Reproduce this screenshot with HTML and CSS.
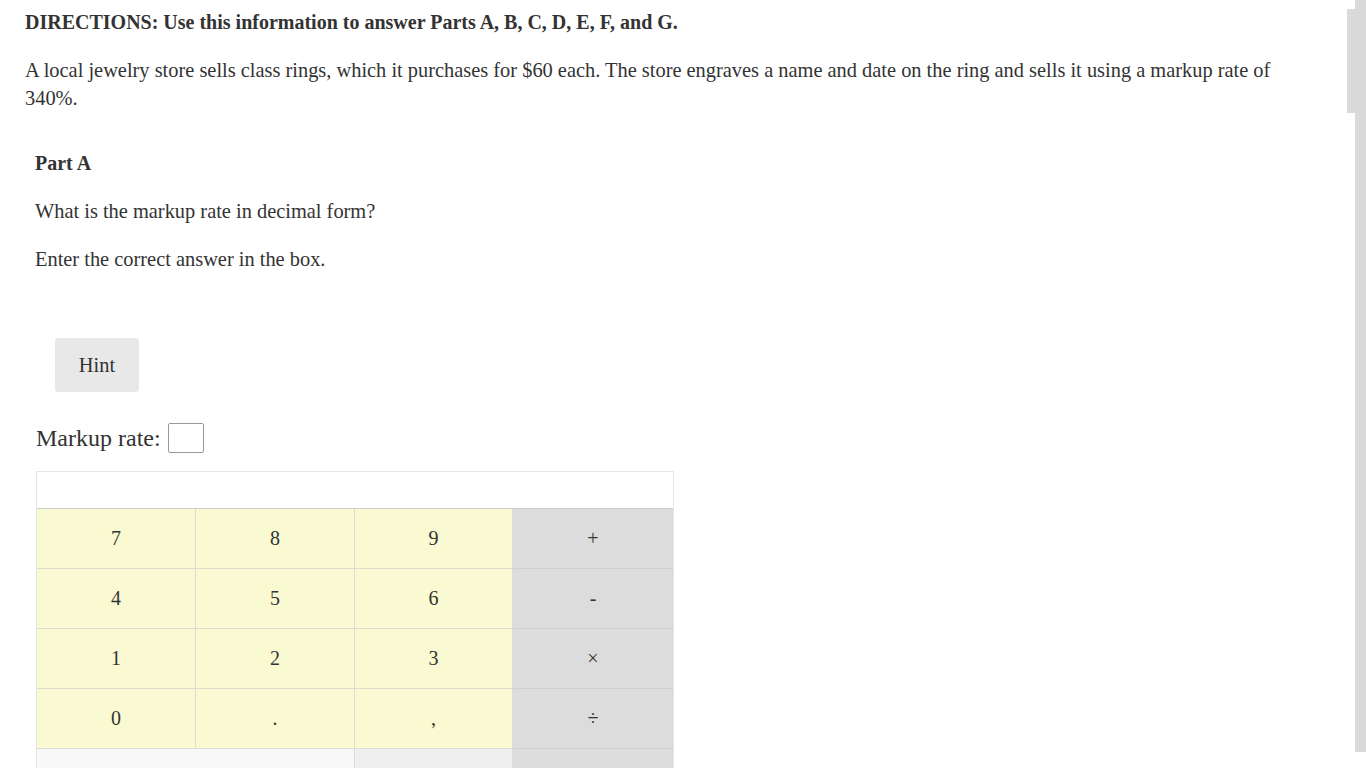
FILE: index.html
```html
<!DOCTYPE html>
<html>
<head>
<meta charset="utf-8">
<link rel="stylesheet" href="styles.css">
</head>
<body>
<div class="page">
  <p class="directions">DIRECTIONS: Use this information to answer Parts A, B, C, D, E, F, and G.</p>
  <p class="stem">A local jewelry store sells class rings, which it purchases for $60 each. The store engraves a name and date on the ring and sells it using a markup rate of 340%.</p>
  <div class="part">
    <p class="part-title">Part A</p>
    <p class="q">What is the markup rate in decimal form?</p>
    <p class="q">Enter the correct answer in the box.</p>
    <button class="hint">Hint</button>
    <div class="answer">
      <span class="label">Markup rate:</span>
      <span class="box"></span>
    </div>
    <div class="keypad">
      <div class="display"></div>
      <div class="keys">
        <div class="key num">7</div><div class="key num">8</div><div class="key num">9</div><div class="key op">+</div>
        <div class="key num">4</div><div class="key num">5</div><div class="key num">6</div><div class="key op">-</div>
        <div class="key num">1</div><div class="key num">2</div><div class="key num">3</div><div class="key op">×</div>
        <div class="key num">0</div><div class="key num">.</div><div class="key num">,</div><div class="key op">÷</div>
        <div class="key wide"></div><div class="key light"></div><div class="key op"></div>
      </div>
    </div>
  </div>
</div>
<div class="scroll-track"></div>
<div class="scroll-thumb"></div>
</body>
</html>
```
FILE: styles.css
```css
html, body {
  margin: 0;
  padding: 0;
  background: #fff;
  overflow: hidden;
  height: 768px;
}
body {
  font-family: "Liberation Serif", "Times New Roman", serif;
  color: #333;
}
.page {
  width: 1280px;
  padding: 8px 0 0 25px;
}
p {
  margin: 0;
  font-size: 20.4px;
  line-height: 28px;
}
.directions {
  font-weight: bold;
  font-size: 20px;
}
.stem {
  margin-top: 20px;
}
.part {
  padding-left: 10px;
  margin-top: 37px;
}
.part-title {
  font-weight: bold;
  font-size: 20px;
}
.q {
  margin-top: 20px;
}
.hint {
  display: block;
  margin: 65px 0 0 20px;
  width: 84px;
  height: 54px;
  border: none;
  border-radius: 3px;
  background: #e8e8e8;
  font-family: "Liberation Serif", "Times New Roman", serif;
  font-size: 20.4px;
  color: #333;
  padding: 0;
}
.answer {
  display: flex;
  align-items: center;
  gap: 7px;
  margin: 30px 0 0 1px;
  height: 32px;
}
.label {
  font-size: 24px;
  line-height: 32px;
}
.box {
  width: 34px;
  height: 28px;
  border: 1px solid #999;
  border-radius: 2px;
}
.keypad {
  margin: 17px 0 0 1px;
  width: 636px;
  border: 1px solid #e6e6e6;
  border-bottom: none;
}
.display {
  height: 36px;
  background: #fff;
  border-bottom: 1px solid #ccc;
}
.keys {
  display: grid;
  grid-template-columns: 159px 159px 158px 160px;
  grid-auto-rows: 60px;
}
.key {
  display: flex;
  align-items: center;
  justify-content: center;
  font-size: 20px;
  color: #333;
  box-sizing: border-box;
  border-right: 1px solid #dcdcd0;
  border-bottom: 1px solid #dcdcd0;
}
.num {
  background: #fafad2;
}
.op {
  background: #dcdcdc;
  border-right: none;
  border-bottom-color: #cfcfcf;
}
.wide {
  grid-column: span 2;
  background: #f8f8f8;
}
.light {
  background: #efefef;
}
.scroll-track {
  position: absolute;
  left: 1355px;
  top: 0;
  width: 11px;
  height: 752px;
  background: #dadada;
}
.scroll-thumb {
  position: absolute;
  left: 1347px;
  top: 9px;
  width: 8px;
  height: 104px;
  background: #dadada;
}
```
